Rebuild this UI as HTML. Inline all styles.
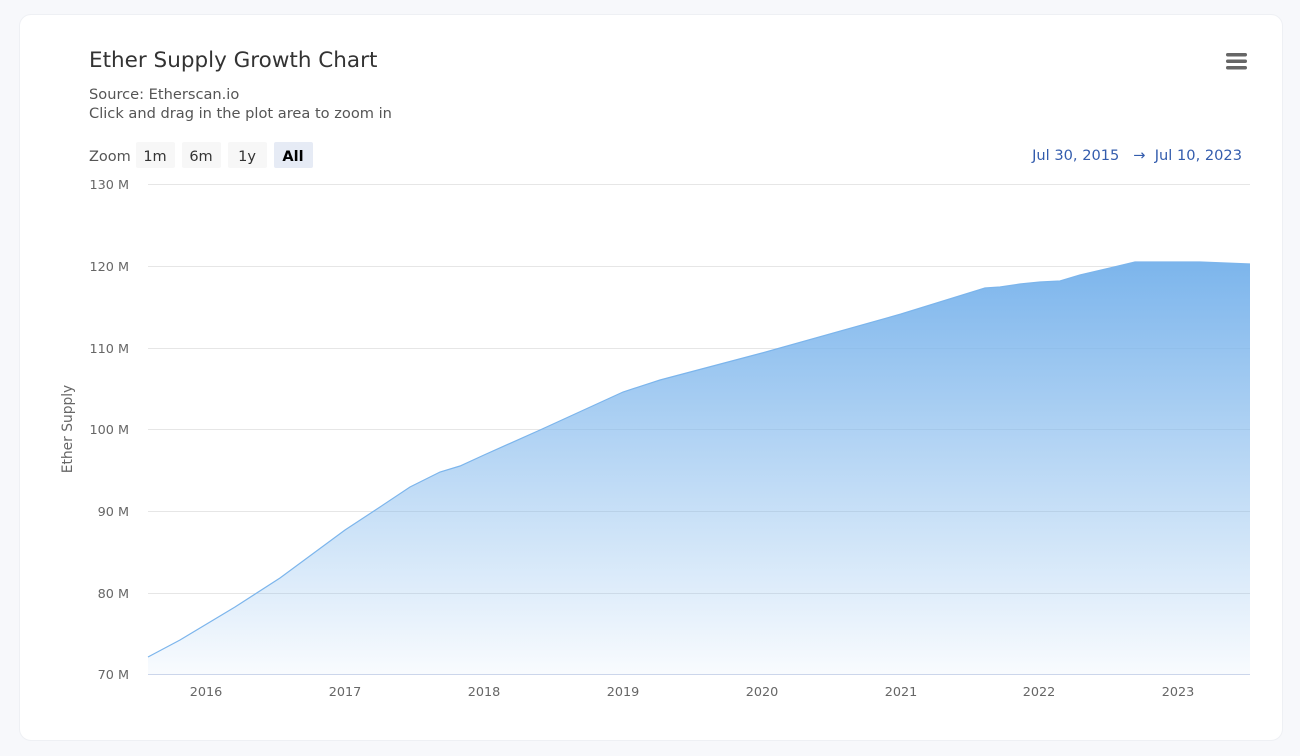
<!DOCTYPE html>
<html><head><meta charset="utf-8"><style>
html,body{margin:0;padding:0;background:#f7f8fb;width:1300px;height:756px;overflow:hidden;font-family:"DejaVu Sans","Liberation Sans",sans-serif;}
.card{position:absolute;left:19px;top:14px;width:1264px;height:727px;background:#fff;border-radius:12px;border:1px solid #eef0f4;box-sizing:border-box;}
</style></head><body>
<div class="card"></div>
<svg width="1300" height="756" style="position:absolute;left:0;top:0" font-family="DejaVu Sans, Liberation Sans, sans-serif">
<defs><linearGradient id="g" x1="0" y1="0" x2="0" y2="1">
<stop offset="0" stop-color="#7cb5ec"/><stop offset="1" stop-color="#7cb5ec" stop-opacity="0.05"/></linearGradient></defs>
<text x="89" y="67" font-size="21.5" fill="#333">Ether Supply Growth Chart</text>
<text x="89" y="99" font-size="14.6" fill="#555">Source: Etherscan.io</text>
<text x="89" y="118" font-size="14.6" fill="#555">Click and drag in the plot area to zoom in</text>
<text x="89" y="161" font-size="14.5" fill="#555">Zoom</text>
<rect x="136" y="142" width="39" height="26" rx="2" fill="#f7f7f7"/><text x="155" y="161" font-size="14.5" fill="#333" text-anchor="middle">1m</text>
<rect x="182" y="142" width="39" height="26" rx="2" fill="#f7f7f7"/><text x="201" y="161" font-size="14.5" fill="#333" text-anchor="middle">6m</text>
<rect x="228" y="142" width="39" height="26" rx="2" fill="#f7f7f7"/><text x="247" y="161" font-size="14.5" fill="#333" text-anchor="middle">1y</text>
<rect x="274" y="142" width="39" height="26" rx="2" fill="#e6ebf5"/><text x="293" y="161" font-size="14.5" fill="#000" font-weight="bold" text-anchor="middle">All</text>
<text x="1242" y="160" font-size="14.6" fill="#335cad" text-anchor="end">Jul 30, 2015 &#160; → &#160;Jul 10, 2023</text>
<g fill="#666"><rect x="1226" y="53" width="21" height="3.5" rx="1.7"/><rect x="1226" y="59.5" width="21" height="3.5" rx="1.7"/><rect x="1226" y="66" width="21" height="3.5" rx="1.7"/></g>
<g stroke="#e6e6e6" stroke-width="1">
<line x1="148" y1="184.5" x2="1250" y2="184.5"/><line x1="148" y1="266.5" x2="1250" y2="266.5"/><line x1="148" y1="348.5" x2="1250" y2="348.5"/><line x1="148" y1="429.5" x2="1250" y2="429.5"/><line x1="148" y1="511.5" x2="1250" y2="511.5"/><line x1="148" y1="593.5" x2="1250" y2="593.5"/></g>
<path d="M148,657 L180,640 L235,607 L280,578 L345,530 L380,507 L410,487 L440,472 L460,466 L484,455 L540,430 L623,392 L660,380 L762,353 L901,314 L985,288 L1000,287 L1020,284 L1040,282 L1060,281 L1080,275 L1110,268 L1135,262 L1200,262 L1225,263 L1250,264 L1250,674 L148,674 Z" fill="url(#g)"/>
<path d="M148,657 L180,640 L235,607 L280,578 L345,530 L380,507 L410,487 L440,472 L460,466 L484,455 L540,430 L623,392 L660,380 L762,353 L901,314 L985,288 L1000,287 L1020,284 L1040,282 L1060,281 L1080,275 L1110,268 L1135,262 L1200,262 L1225,263 L1250,264" fill="none" stroke="#7cb5ec" stroke-width="1.2"/>
<line x1="148" y1="674.5" x2="1250" y2="674.5" stroke="#ccd6eb"/>
<g font-size="12.8" fill="#666" text-anchor="end">
<text x="129" y="189">130 M</text><text x="129" y="271">120 M</text><text x="129" y="353">110 M</text><text x="129" y="434">100 M</text><text x="129" y="516">90 M</text><text x="129" y="598">80 M</text><text x="129" y="679">70 M</text></g>
<g font-size="12.8" fill="#666" text-anchor="middle">
<text x="206" y="696">2016</text><text x="345" y="696">2017</text><text x="484" y="696">2018</text><text x="623" y="696">2019</text><text x="762" y="696">2020</text><text x="901" y="696">2021</text><text x="1039" y="696">2022</text><text x="1178" y="696">2023</text></g>
<text transform="translate(72,429) rotate(-90)" font-size="13.8" fill="#666" text-anchor="middle">Ether Supply</text>
</svg>
</body></html>
